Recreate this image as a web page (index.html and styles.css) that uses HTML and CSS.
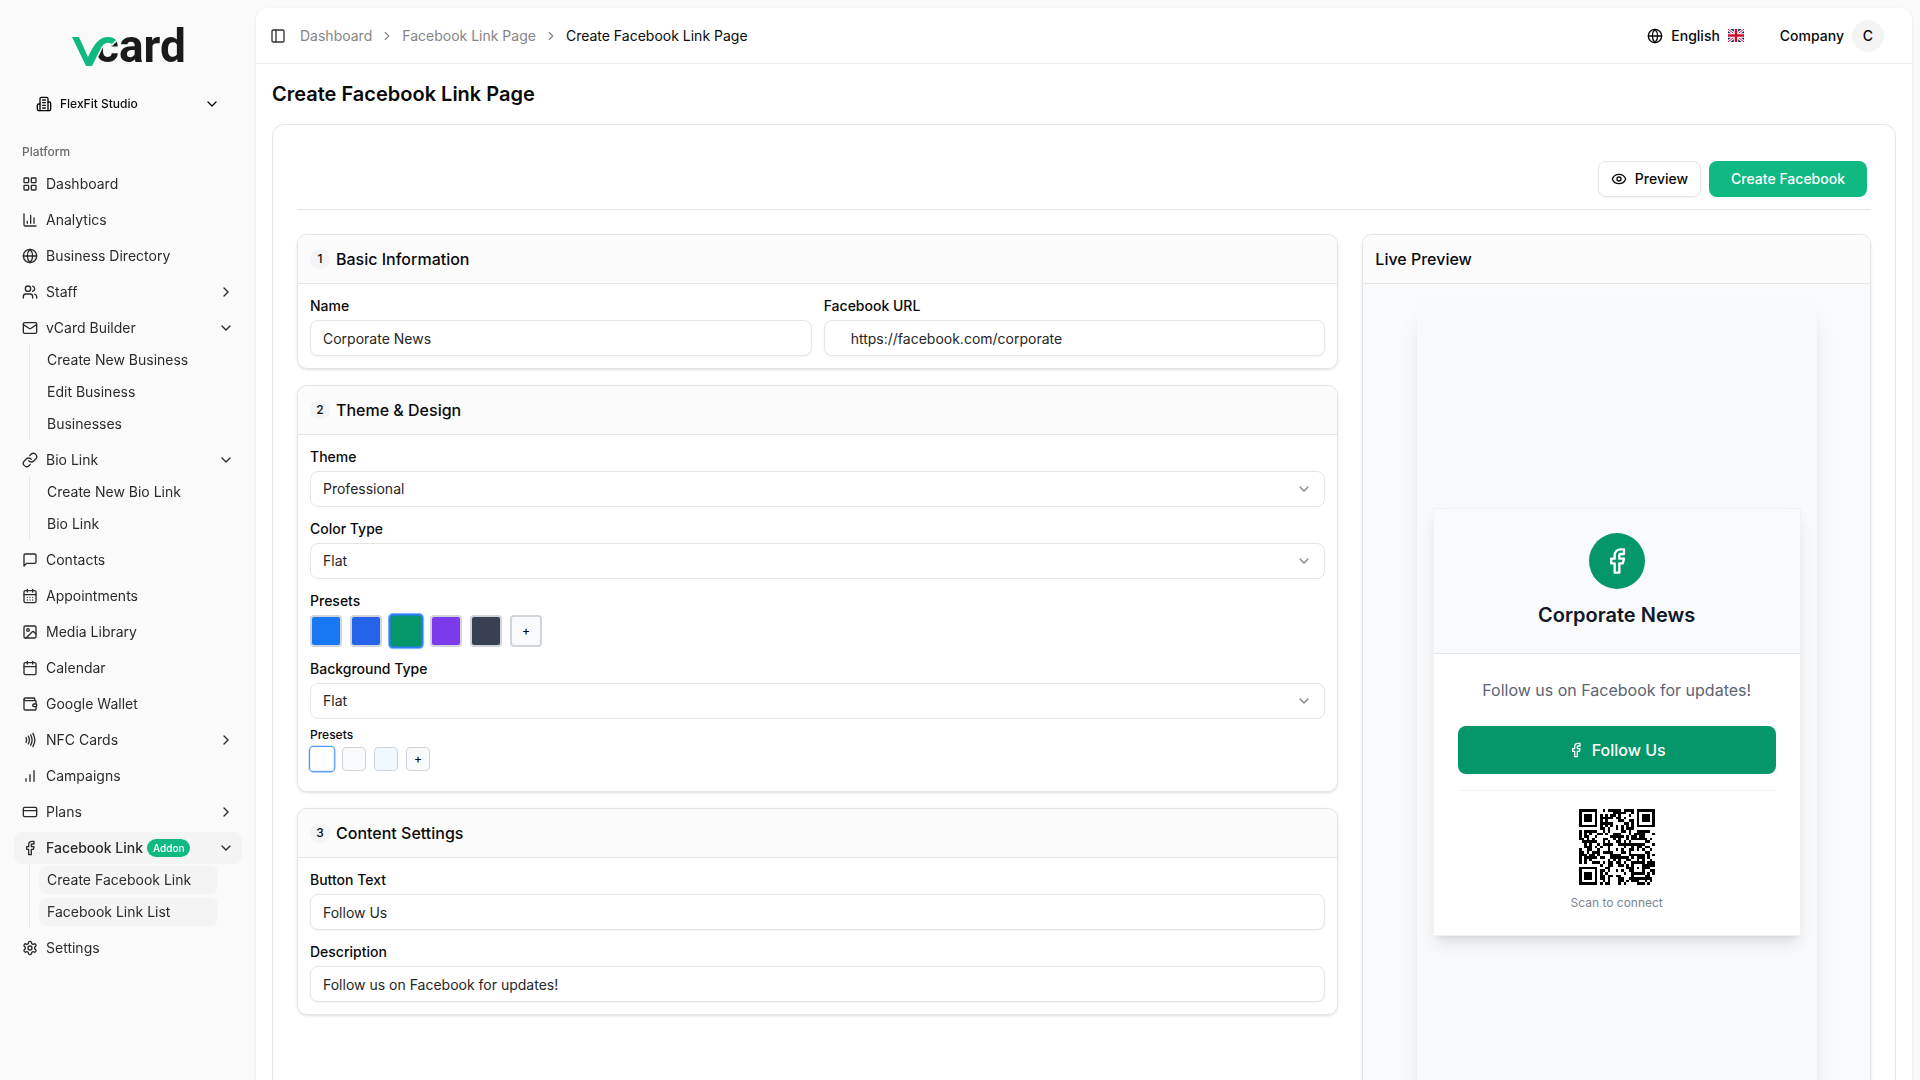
FILE: index.html
```html
<!DOCTYPE html>
<html lang="en">
<head>
  <meta charset="UTF-8">
  <meta name="viewport" content="width=device-width, initial-scale=1.0">
  <title>Create Facebook Link Page</title>
  <link rel="stylesheet" href="styles.css">
</head>
<body>

  <!-- Icon sprite -->
  <svg class="sprite" aria-hidden="true">
    <symbol id="i-building" viewBox="0 0 24 24"><path d="M6 22V4a2 2 0 0 1 2-2h8a2 2 0 0 1 2 2v18Z"/><path d="M6 12H4a2 2 0 0 0-2 2v6a2 2 0 0 0 2 2h2"/><path d="M18 9h2a2 2 0 0 1 2 2v9a2 2 0 0 1-2 2h-2"/><path d="M10 6h4M10 10h4M10 14h4M10 18h4"/></symbol>
    <symbol id="i-down" viewBox="0 0 24 24"><path d="m6 9 6 6 6-6"/></symbol>
    <symbol id="i-right" viewBox="0 0 24 24"><path d="m9 18 6-6-6-6"/></symbol>
    <symbol id="i-grid" viewBox="0 0 24 24"><rect x="3" y="3" width="7" height="7" rx="1"/><rect x="14" y="3" width="7" height="7" rx="1"/><rect x="14" y="14" width="7" height="7" rx="1"/><rect x="3" y="14" width="7" height="7" rx="1"/></symbol>
    <symbol id="i-chart" viewBox="0 0 24 24"><path d="M3 3v16a2 2 0 0 0 2 2h16"/><path d="M18 17V9M13 17V5M8 17v-3"/></symbol>
    <symbol id="i-globe" viewBox="0 0 24 24"><circle cx="12" cy="12" r="10"/><path d="M12 2a14.5 14.5 0 0 0 0 20 14.5 14.5 0 0 0 0-20"/><path d="M2 12h20"/></symbol>
    <symbol id="i-users" viewBox="0 0 24 24"><path d="M16 21v-2a4 4 0 0 0-4-4H6a4 4 0 0 0-4 4v2"/><circle cx="9" cy="7" r="4"/><path d="M22 21v-2a4 4 0 0 0-3-3.87"/><path d="M16 3.13a4 4 0 0 1 0 7.75"/></symbol>
    <symbol id="i-mail" viewBox="0 0 24 24"><rect x="2" y="4" width="20" height="16" rx="2"/><path d="m22 7-8.97 5.7a1.94 1.94 0 0 1-2.06 0L2 7"/></symbol>
    <symbol id="i-link" viewBox="0 0 24 24"><path d="M10 13a5 5 0 0 0 7.54.54l3-3a5 5 0 0 0-7.07-7.07l-1.72 1.71"/><path d="M14 11a5 5 0 0 0-7.54-.54l-3 3a5 5 0 0 0 7.07 7.07l1.71-1.71"/></symbol>
    <symbol id="i-message" viewBox="0 0 24 24"><path d="M21 15a2 2 0 0 1-2 2H7l-4 4V5a2 2 0 0 1 2-2h14a2 2 0 0 1 2 2z"/></symbol>
    <symbol id="i-days" viewBox="0 0 24 24"><path d="M8 2v4M16 2v4M3 10h18"/><rect x="3" y="4" width="18" height="18" rx="2"/><path d="M8 14h.01M12 14h.01M16 14h.01M8 18h.01M12 18h.01M16 18h.01"/></symbol>
    <symbol id="i-image" viewBox="0 0 24 24"><rect x="3" y="3" width="18" height="18" rx="2"/><circle cx="9" cy="9" r="2"/><path d="m21 15-3.086-3.086a2 2 0 0 0-2.828 0L6 21"/></symbol>
    <symbol id="i-calendar" viewBox="0 0 24 24"><path d="M8 2v4M16 2v4M3 10h18"/><rect x="3" y="4" width="18" height="18" rx="2"/></symbol>
    <symbol id="i-wallet" viewBox="0 0 24 24"><path d="M19 7V4a1 1 0 0 0-1-1H5a2 2 0 0 0 0 4h15a1 1 0 0 1 1 1v4h-3a2 2 0 0 0 0 4h3a1 1 0 0 0 1-1v-2a1 1 0 0 0-1-1"/><path d="M3 5v14a2 2 0 0 0 2 2h15a1 1 0 0 0 1-1v-4"/></symbol>
    <symbol id="i-nfc" viewBox="0 0 24 24"><path d="M6 8.32a7.43 7.43 0 0 1 0 7.36"/><path d="M9.46 6.21a11.76 11.76 0 0 1 0 11.58"/><path d="M12.91 4.1a15.91 15.91 0 0 1 .01 15.8"/><path d="M16.37 2a20.16 20.16 0 0 1 0 20"/></symbol>
    <symbol id="i-bars" viewBox="0 0 24 24"><path d="M12 20V10M18 20V4M6 20v-4"/></symbol>
    <symbol id="i-card" viewBox="0 0 24 24"><rect x="2" y="5" width="20" height="14" rx="2"/><path d="M2 10h20"/></symbol>
    <symbol id="i-facebook" viewBox="0 0 24 24"><path d="M18 2h-3a5 5 0 0 0-5 5v3H7v4h3v8h4v-8h3l1-4h-4V7a1 1 0 0 1 1-1h3z"/></symbol>
    <symbol id="i-settings" viewBox="0 0 24 24"><path d="M12.22 2h-.44a2 2 0 0 0-2 2v.18a2 2 0 0 1-1 1.73l-.43.25a2 2 0 0 1-2 0l-.15-.08a2 2 0 0 0-2.73.73l-.22.38a2 2 0 0 0 .73 2.73l.15.1a2 2 0 0 1 1 1.72v.51a2 2 0 0 1-1 1.74l-.15.09a2 2 0 0 0-.73 2.73l.22.38a2 2 0 0 0 2.73.73l.15-.08a2 2 0 0 1 2 0l.43.25a2 2 0 0 1 1 1.73V20a2 2 0 0 0 2 2h.44a2 2 0 0 0 2-2v-.18a2 2 0 0 1 1-1.73l.43-.25a2 2 0 0 1 2 0l.15.08a2 2 0 0 0 2.73-.73l.22-.39a2 2 0 0 0-.73-2.73l-.15-.08a2 2 0 0 1-1-1.74v-.5a2 2 0 0 1 1-1.74l.15-.09a2 2 0 0 0 .73-2.73l-.22-.38a2 2 0 0 0-2.73-.73l-.15.08a2 2 0 0 1-2 0l-.43-.25a2 2 0 0 1-1-1.73V4a2 2 0 0 0-2-2z"/><circle cx="12" cy="12" r="3"/></symbol>
    <symbol id="i-panel" viewBox="0 0 24 24"><rect x="3" y="3" width="18" height="18" rx="2"/><path d="M9 3v18"/></symbol>
    <symbol id="i-eye" viewBox="0 0 24 24"><path d="M2.062 12.348a1 1 0 0 1 0-.696 10.75 10.75 0 0 1 19.876 0 1 1 0 0 1 0 .696 10.75 10.75 0 0 1-19.876 0"/><circle cx="12" cy="12" r="3"/></symbol>
  </svg>

  <div class="app">
    <aside class="sidebar">
      <a href="#" class="logo" aria-label="vcard">
        <svg viewBox="-6 -10 124 60" width="124" height="60">
          <text x="23" y="34" class="logo-text">card</text>
          <path class="logo-mark" d="M0 9h7l9 20C22 16 27 9 36 9c4 0 6 1 8 3l-4 4c-5-3-9-1-12 6L20 38h-6z"/>
        </svg>
      </a>

      <button class="company-switch">
        <svg class="icon"><use href="#i-building"/></svg>
        <span>FlexFit Studio</span>
        <svg class="icon chevron"><use href="#i-down"/></svg>
      </button>

      <nav class="nav">
        <div class="nav-label">Platform</div>
        <a href="#" class="nav-item"><svg class="icon"><use href="#i-grid"/></svg>Dashboard</a>
        <a href="#" class="nav-item"><svg class="icon"><use href="#i-chart"/></svg>Analytics</a>
        <a href="#" class="nav-item"><svg class="icon"><use href="#i-globe"/></svg>Business Directory</a>
        <button class="nav-item"><svg class="icon"><use href="#i-users"/></svg>Staff<svg class="icon chevron"><use href="#i-right"/></svg></button>
        <div class="nav-group">
          <button class="nav-item"><svg class="icon"><use href="#i-mail"/></svg>vCard Builder<svg class="icon chevron"><use href="#i-down"/></svg></button>
          <div class="sub-nav">
            <a href="#" class="sub-item">Create New Business</a>
            <a href="#" class="sub-item">Edit Business</a>
            <a href="#" class="sub-item">Businesses</a>
          </div>
        </div>
        <div class="nav-group">
          <button class="nav-item"><svg class="icon"><use href="#i-link"/></svg>Bio Link<svg class="icon chevron"><use href="#i-down"/></svg></button>
          <div class="sub-nav">
            <a href="#" class="sub-item">Create New Bio Link</a>
            <a href="#" class="sub-item">Bio Link</a>
          </div>
        </div>
        <a href="#" class="nav-item"><svg class="icon"><use href="#i-message"/></svg>Contacts</a>
        <a href="#" class="nav-item"><svg class="icon"><use href="#i-days"/></svg>Appointments</a>
        <a href="#" class="nav-item"><svg class="icon"><use href="#i-image"/></svg>Media Library</a>
        <a href="#" class="nav-item"><svg class="icon"><use href="#i-calendar"/></svg>Calendar</a>
        <a href="#" class="nav-item"><svg class="icon"><use href="#i-wallet"/></svg>Google Wallet</a>
        <button class="nav-item"><svg class="icon"><use href="#i-nfc"/></svg>NFC Cards<svg class="icon chevron"><use href="#i-right"/></svg></button>
        <a href="#" class="nav-item"><svg class="icon"><use href="#i-bars"/></svg>Campaigns</a>
        <button class="nav-item"><svg class="icon"><use href="#i-card"/></svg>Plans<svg class="icon chevron"><use href="#i-right"/></svg></button>
        <div class="nav-group">
          <button class="nav-item active"><svg class="icon"><use href="#i-facebook"/></svg><span class="nav-text">Facebook Link <span class="addon">Addon</span></span><svg class="icon chevron"><use href="#i-down"/></svg></button>
          <div class="sub-nav">
            <a href="#" class="sub-item active">Create Facebook Link</a>
            <a href="#" class="sub-item active">Facebook Link List</a>
          </div>
        </div>
        <a href="#" class="nav-item"><svg class="icon"><use href="#i-settings"/></svg>Settings</a>
      </nav>
    </aside>

    <main class="main">
      <header class="topbar">
        <button class="icon-btn" aria-label="Toggle sidebar"><svg class="icon"><use href="#i-panel"/></svg></button>
        <nav class="breadcrumb">
          <a href="#">Dashboard</a>
          <svg class="icon small"><use href="#i-right"/></svg>
          <a href="#">Facebook Link Page</a>
          <svg class="icon small"><use href="#i-right"/></svg>
          <span class="current">Create Facebook Link Page</span>
        </nav>
        <div class="topbar-right">
          <button class="top-btn">
            <svg class="icon"><use href="#i-globe"/></svg>
            English
            <svg class="flag" viewBox="0 0 32 26">
              <rect width="32" height="26" fill="#012169"/>
              <path d="M0 0l32 26M32 0L0 26" stroke="#fff" stroke-width="6"/>
              <path d="M0 0l32 26M32 0L0 26" stroke="#c8102e" stroke-width="2"/>
              <path d="M16 0v26M0 13h32" stroke="#fff" stroke-width="9"/>
              <path d="M16 0v26M0 13h32" stroke="#c8102e" stroke-width="5"/>
            </svg>
          </button>
          <button class="top-btn">Company <span class="avatar">C</span></button>
        </div>
      </header>

      <div class="content">
        <h1>Create Facebook Link Page</h1>

        <div class="panel">
          <div class="actions">
            <button class="btn btn-outline"><svg class="icon"><use href="#i-eye"/></svg>Preview</button>
            <button class="btn btn-primary">Create Facebook</button>
          </div>

          <div class="columns">
            <form class="form">
              <section class="card">
                <h2 class="card-header"><span class="step">1</span>Basic Information</h2>
                <div class="card-body two-cols">
                  <div class="field">
                    <label for="name">Name</label>
                    <input type="text" id="name" value="Corporate News">
                  </div>
                  <div class="field">
                    <label for="url">Facebook URL</label>
                    <input type="text" id="url" class="url-input" value="https://facebook.com/corporate">
                  </div>
                </div>
              </section>

              <section class="card">
                <h2 class="card-header"><span class="step">2</span>Theme &amp; Design</h2>
                <div class="card-body">
                  <div class="field">
                    <label for="theme">Theme</label>
                    <div class="select">
                      <select id="theme"><option>Professional</option></select>
                      <svg class="icon"><use href="#i-down"/></svg>
                    </div>
                  </div>
                  <div class="field">
                    <label for="colorType">Color Type</label>
                    <div class="select">
                      <select id="colorType"><option>Flat</option></select>
                      <svg class="icon"><use href="#i-down"/></svg>
                    </div>
                  </div>
                  <div class="field">
                    <span class="label">Presets</span>
                    <div class="swatches">
                      <button type="button" class="swatch facebook" aria-label="Facebook blue"></button>
                      <button type="button" class="swatch blue" aria-label="Blue"></button>
                      <button type="button" class="swatch green selected" aria-label="Green"></button>
                      <button type="button" class="swatch purple" aria-label="Purple"></button>
                      <button type="button" class="swatch slate" aria-label="Slate"></button>
                      <button type="button" class="swatch add">+</button>
                    </div>
                  </div>
                  <div class="field background-field">
                    <label for="bgType">Background Type</label>
                    <div class="select">
                      <select id="bgType"><option>Flat</option></select>
                      <svg class="icon"><use href="#i-down"/></svg>
                    </div>
                    <span class="label-small">Presets</span>
                    <div class="swatches small">
                      <button type="button" class="swatch white selected" aria-label="White"></button>
                      <button type="button" class="swatch gray" aria-label="Gray"></button>
                      <button type="button" class="swatch sky" aria-label="Sky"></button>
                      <button type="button" class="swatch add">+</button>
                    </div>
                  </div>
                </div>
              </section>

              <section class="card">
                <h2 class="card-header"><span class="step">3</span>Content Settings</h2>
                <div class="card-body">
                  <div class="field">
                    <label for="buttonText">Button Text</label>
                    <input type="text" id="buttonText" value="Follow Us">
                  </div>
                  <div class="field">
                    <label for="description">Description</label>
                    <input type="text" id="description" value="Follow us on Facebook for updates!">
                  </div>
                </div>
              </section>
            </form>

            <section class="card preview">
              <h2 class="card-header">Live Preview</h2>
              <div class="preview-body">
                <div class="frame">
                  <div class="page-card">
                    <div class="page-head">
                      <div class="page-logo"><svg class="icon"><use href="#i-facebook"/></svg></div>
                      <h3>Corporate News</h3>
                    </div>
                    <div class="page-content">
                      <p class="page-text">Follow us on Facebook for updates!</p>
                      <button class="follow-btn"><svg class="icon"><use href="#i-facebook"/></svg>Follow Us</button>
                      <div class="qr-box">
                        <svg id="qr" class="qr" viewBox="0 0 29 29" shape-rendering="crispEdges"></svg>
                        <p>Scan to connect</p>
                      </div>
                    </div>
                  </div>
                </div>
              </div>
            </section>
          </div>
        </div>
      </div>
    </main>
  </div>

  <script src="qr.js"></script>
</body>
</html>
```
FILE: styles.css
```css
* {
  box-sizing: border-box;
}
body {
  margin: 0;
  height: 100vh;
  overflow-y: auto;
  scrollbar-width: none;
  font-family: Inter, "Liberation Sans", sans-serif;
  font-size: 14px;
  line-height: 20px;
  color: #0a0a0a;
  background-color: #fafafa;
}
button,
input,
select {
  font: inherit;
  color: inherit;
}
button {
  border: none;
  background: none;
  padding: 0;
  cursor: pointer;
}
a {
  color: inherit;
  text-decoration: none;
}
h1,
h2,
h3,
p {
  margin: 0;
}
.sprite {
  display: none;
}
.icon {
  width: 16px;
  height: 16px;
  flex-shrink: 0;
  fill: none;
  stroke: currentColor;
  stroke-width: 2;
  stroke-linecap: round;
  stroke-linejoin: round;
}
.icon.small {
  width: 14px;
  height: 14px;
}
.app {
  display: flex;
  align-items: flex-start;
}

/* Sidebar */
.sidebar {
  position: sticky;
  top: 0;
  width: 256px;
  flex-shrink: 0;
  height: 100vh;
  padding: 8px 14px;
}
.logo {
  display: flex;
  justify-content: center;
  align-items: center;
  height: 80px;
}
.logo-text {
  font-family: Roboto, sans-serif;
  font-size: 46px;
  font-weight: 700;
  fill: #1a1a1a;
}
.logo-mark {
  fill: #10b981;
  stroke: #fafafa;
  stroke-width: 3;
  paint-order: stroke;
}
.company-switch {
  display: flex;
  align-items: center;
  gap: 8px;
  width: 200px;
  height: 32px;
  margin: 0 14px 16px;
  padding: 0 8px;
  font-size: 12px;
  font-weight: 500;
}
.chevron {
  margin-left: auto;
}
.nav,
.nav-group {
  display: flex;
  flex-direction: column;
}
.nav {
  gap: 4px;
}
.nav-label {
  height: 28px;
  padding: 0 8px;
  line-height: 32px;
  font-size: 12px;
  font-weight: 500;
  color: #6b6b6b;
}
.nav-item {
  display: flex;
  align-items: center;
  gap: 8px;
  width: 100%;
  height: 32px;
  padding: 0 8px;
  border-radius: 8px;
  text-align: left;
  color: #2b2b2b;
}
.nav-item.active {
  background-color: #f4f4f5;
  font-weight: 500;
}
.nav-text {
  display: flex;
  align-items: center;
  gap: 4px;
}
.addon {
  padding: 0 6px;
  border-radius: 9px;
  font-size: 10px;
  line-height: 18px;
  color: #fff;
  background-color: #10b981;
}
.sub-nav {
  display: flex;
  flex-direction: column;
  gap: 4px;
  margin: 0 24px 0 15px;
  padding: 2px 0 2px 9px;
  border-left: 1px solid #e5e5e5;
}
.sub-item {
  padding: 4px 8px;
  border-radius: 8px;
  color: #2b2b2b;
}
.sub-item.active {
  background-color: #f4f4f5;
}

/* Main area */
.main {
  flex: 1;
  min-width: 0;
  margin: 8px 8px 8px 0;
  border-radius: 12px;
  background-color: #fff;
  box-shadow: 0 1px 3px rgba(0, 0, 0, 0.1);
}
.topbar {
  display: flex;
  align-items: center;
  gap: 14px;
  height: 56px;
  padding: 0 28px 0 14px;
  border-bottom: 1px solid #f0f0f0;
}
.icon-btn {
  display: flex;
  color: #333;
}
.breadcrumb {
  display: flex;
  align-items: center;
  gap: 8px;
  color: #858585;
}
.breadcrumb .current {
  color: #0a0a0a;
}
.topbar-right {
  display: flex;
  align-items: center;
  gap: 36px;
  margin-left: auto;
}
.top-btn {
  display: flex;
  align-items: center;
  gap: 8px;
  font-weight: 500;
}
.flag {
  width: 16px;
  height: 13px;
}
.avatar {
  width: 32px;
  height: 32px;
  border-radius: 50%;
  line-height: 32px;
  text-align: center;
  background-color: #f4f4f5;
}
.content {
  padding: 16px;
}
h1 {
  margin-bottom: 16px;
  font-size: 20px;
  line-height: 28px;
  font-weight: 600;
}
.panel {
  padding: 24px;
  border: 1px solid #e5e5e5;
  border-radius: 12px;
}
.actions {
  display: flex;
  justify-content: flex-end;
  gap: 8px;
  padding: 12px 4px;
  margin-bottom: 24px;
  border-bottom: 1px solid #e5e5e5;
}
.btn {
  display: flex;
  align-items: center;
  gap: 8px;
  height: 36px;
  border-radius: 8px;
  font-weight: 500;
}
.btn-outline {
  padding: 0 12px;
  border: 1px solid #e5e5e5;
  box-shadow: 0 1px 2px rgba(0, 0, 0, 0.05);
}
.btn-primary {
  padding: 0 22px;
  color: #fff;
  background-color: #10b981;
}
.columns {
  display: grid;
  grid-template-columns: repeat(3, 1fr);
  gap: 24px;
}
.form {
  grid-column: span 2;
  display: flex;
  flex-direction: column;
  gap: 16px;
}

/* Cards */
.card {
  border: 1px solid #e5e5e5;
  border-radius: 10px;
  overflow: hidden;
  box-shadow: 0 1px 3px rgba(0, 0, 0, 0.1), 0 1px 2px -1px rgba(0, 0, 0, 0.1);
}
.card-header {
  display: flex;
  align-items: center;
  gap: 6px;
  padding: 12px;
  border-bottom: 1px solid #e5e5e5;
  font-size: 16px;
  line-height: 24px;
  font-weight: 500;
  background-color: #fbfbfb;
}
.step {
  width: 20px;
  height: 20px;
  border-radius: 50%;
  font-size: 12px;
  line-height: 20px;
  text-align: center;
  background-color: #f3f4f6;
}
.card-body {
  display: flex;
  flex-direction: column;
  gap: 12px;
  padding: 12px;
}
.card-body.two-cols {
  display: grid;
  grid-template-columns: 1fr 1fr;
}
.field {
  display: flex;
  flex-direction: column;
  gap: 4px;
}
.field label,
.label {
  font-weight: 500;
}
.field input,
.field select {
  width: 100%;
  height: 36px;
  padding: 0 12px;
  border: 1px solid #e5e5e5;
  border-radius: 8px;
  color: #262626;
  background-color: #fff;
}
.field input {
  box-shadow: 0 1px 2px rgba(0, 0, 0, 0.05);
}
.field .url-input {
  padding-left: 26px;
}
.select {
  display: grid;
  align-items: center;
}
.select select,
.select .icon {
  grid-area: 1 / 1;
}
.select select {
  appearance: none;
}
.select .icon {
  justify-self: end;
  margin-right: 13px;
  color: #858585;
  pointer-events: none;
}
.label-small {
  margin-top: 4px;
  font-size: 12px;
  line-height: 16px;
  font-weight: 500;
}
.background-field {
  padding-bottom: 8px;
}
.swatches {
  display: flex;
  gap: 8px;
}
.swatch {
  width: 32px;
  height: 32px;
  border: 2px solid #d1d5db;
  border-radius: 4px;
  font-size: 12px;
  font-weight: 500;
  line-height: 16px;
}
.swatches.small .swatch {
  width: 24px;
  height: 24px;
  border-width: 1px;
}
.swatches .swatch.selected {
  border-color: #2b7fff;
  transform: scale(1.1);
}
.swatch.facebook { background-color: #1877f2; }
.swatch.blue { background-color: #2563eb; }
.swatch.green { background-color: #059669; }
.swatch.purple { background-color: #7c3aed; }
.swatch.slate { background-color: #374151; }
.swatch.white { background-color: #fff; }
.swatch.gray,
.swatch.add { background-color: #f9fafb; }
.swatch.sky { background-color: #f0f9ff; }

/* Live preview */
.preview-body {
  padding: 16px;
  background-color: #f9fafc;
}
.frame {
  display: flex;
  align-items: center;
  max-width: 400px;
  min-height: 844px;
  margin: 0 auto;
  padding: 16px;
  background-color: #f8f9fb;
  box-shadow: 0 20px 25px -5px rgba(0, 0, 0, 0.1), 0 8px 10px -6px rgba(0, 0, 0, 0.1);
}
.page-card {
  width: 100%;
  border: 1px solid #f1f2f4;
  background-color: #fff;
  box-shadow: 0 10px 15px -3px rgba(0, 0, 0, 0.1), 0 4px 6px -4px rgba(0, 0, 0, 0.1);
}
.page-head {
  display: flex;
  flex-direction: column;
  align-items: center;
  gap: 12px;
  padding: 24px;
  border-bottom: 1px solid #e5e7eb;
  background-color: #f9fafc;
}
.page-logo {
  display: flex;
  align-items: center;
  justify-content: center;
  width: 56px;
  height: 56px;
  border-radius: 50%;
  color: #fff;
  background-color: #059669;
}
.page-logo .icon {
  width: 28px;
  height: 28px;
}
.page-head h3 {
  font-size: 20px;
  line-height: 28px;
  font-weight: 600;
  color: #111827;
}
.page-content {
  padding: 24px;
  text-align: center;
}
.page-text {
  margin-bottom: 24px;
  font-size: 16px;
  line-height: 24px;
  color: #5b6472;
}
.follow-btn {
  display: flex;
  align-items: center;
  justify-content: center;
  gap: 8px;
  width: 100%;
  height: 48px;
  margin-bottom: 16px;
  border-radius: 8px;
  font-size: 16px;
  font-weight: 500;
  color: #fff;
  background-color: #059669;
}
.qr-box {
  padding-top: 16px;
  border-top: 1px solid #f3f4f6;
  font-size: 12px;
  line-height: 16px;
  color: #7c8594;
}
.qr {
  display: block;
  width: 80px;
  height: 80px;
  margin: 0 auto 8px;
  padding: 2px;
}
```
FILE: qr.js
```js
// QR code, version 3 (29x29), error correction level M
const SIZE = 29;
const DATA_WORDS = 44;
const EC_WORDS = 26;

const exp = [];
const log = [];
for (let i = 0, x = 1; i < 255; i++) {
  exp[i] = x;
  log[x] = i;
  x = x << 1;
  if (x > 255) x ^= 0x11d;
}

function mul(a, b) {
  return a && b ? exp[(log[a] + log[b]) % 255] : 0;
}

function getCodewords(text) {
  let bits = '0100' + text.length.toString(2).padStart(8, '0');
  for (const c of text) bits += c.charCodeAt(0).toString(2).padStart(8, '0');
  bits += '0000';
  const data = [];
  for (let i = 0; i < bits.length; i += 8) data.push(parseInt(bits.substr(i, 8), 2));
  for (let pad = 0xec; data.length < DATA_WORDS; pad ^= 0xec ^ 0x11) data.push(pad);

  // generator polynomial
  const gen = new Array(EC_WORDS).fill(0);
  gen[EC_WORDS - 1] = 1;
  for (let i = 0; i < EC_WORDS; i++) {
    for (let j = 0; j < EC_WORDS; j++) {
      gen[j] = mul(gen[j], exp[i]) ^ (gen[j + 1] || 0);
    }
  }
  const ec = new Array(EC_WORDS).fill(0);
  data.forEach(b => {
    const f = b ^ ec.shift();
    ec.push(0);
    gen.forEach((g, i) => { ec[i] ^= mul(g, f); });
  });
  return data.concat(ec);
}

const masks = [
  (x, y) => (x + y) % 2,
  (x, y) => y % 2,
  (x, y) => x % 3,
  (x, y) => (x + y) % 3,
  (x, y) => (Math.floor(x / 3) + Math.floor(y / 2)) % 2,
  (x, y) => (x * y) % 2 + (x * y) % 3,
  (x, y) => ((x * y) % 2 + (x * y) % 3) % 2,
  (x, y) => ((x + y) % 2 + (x * y) % 3) % 2
];

function buildMatrix(text, mask) {
  const grid = Array.from({ length: SIZE }, () => new Array(SIZE).fill(null));
  const set = (x, y, dark) => {
    if (x >= 0 && y >= 0 && x < SIZE && y < SIZE) grid[y][x] = dark ? 1 : 0;
  };

  for (let i = 0; i < SIZE; i++) {
    set(6, i, i % 2 === 0);
    set(i, 6, i % 2 === 0);
  }
  [[3, 3], [SIZE - 4, 3], [3, SIZE - 4]].forEach(([cx, cy]) => {
    for (let dy = -4; dy <= 4; dy++) {
      for (let dx = -4; dx <= 4; dx++) {
        const d = Math.max(Math.abs(dx), Math.abs(dy));
        set(cx + dx, cy + dy, d !== 2 && d !== 4);
      }
    }
  });
  for (let dy = -2; dy <= 2; dy++) {
    for (let dx = -2; dx <= 2; dx++) {
      set(22 + dx, 22 + dy, Math.max(Math.abs(dx), Math.abs(dy)) !== 1);
    }
  }

  // format bits
  let rem = mask;
  for (let i = 0; i < 10; i++) rem = (rem << 1) ^ ((rem >>> 9) * 0x537);
  const format = ((mask << 10) | rem) ^ 0x5412;
  const bit = i => (format >>> i) & 1;
  for (let i = 0; i < 6; i++) set(8, i, bit(i));
  set(8, 7, bit(6));
  set(8, 8, bit(7));
  set(7, 8, bit(8));
  for (let i = 9; i < 15; i++) set(14 - i, 8, bit(i));
  for (let i = 0; i < 8; i++) set(SIZE - 1 - i, 8, bit(i));
  for (let i = 8; i < 15; i++) set(8, SIZE - 15 + i, bit(i));
  set(8, SIZE - 8, 1);

  // data in zigzag order
  const words = getCodewords(text);
  let n = 0;
  for (let right = SIZE - 1; right >= 1; right -= 2) {
    if (right === 6) right = 5;
    const up = ((right + 1) & 2) === 0;
    for (let v = 0; v < SIZE; v++) {
      for (let j = 0; j < 2; j++) {
        const x = right - j;
        const y = up ? SIZE - 1 - v : v;
        if (grid[y][x] !== null) continue;
        const value = n < words.length * 8 ? (words[n >> 3] >>> (7 - (n & 7))) & 1 : 0;
        n++;
        grid[y][x] = value ^ (masks[mask](x, y) === 0 ? 1 : 0);
      }
    }
  }
  return grid;
}

function penalty(grid) {
  let score = 0;
  const columns = grid.map((_, x) => grid.map(row => row[x]));
  grid.concat(columns).forEach(row => {
    const line = row.join('');
    (line.match(/0{5,}|1{5,}/g) || []).forEach(run => { score += run.length - 2; });
    score += 40 * (line.match(/(?=10111010000|00001011101)/g) || []).length;
  });
  for (let y = 0; y < SIZE - 1; y++) {
    for (let x = 0; x < SIZE - 1; x++) {
      const sum = grid[y][x] + grid[y][x + 1] + grid[y + 1][x] + grid[y + 1][x + 1];
      if (sum === 0 || sum === 4) score += 3;
    }
  }
  const dark = grid.flat().filter(Boolean).length / (SIZE * SIZE);
  return score + Math.floor(Math.abs(dark - 0.5) * 20) * 10;
}

function drawQr(svg, text) {
  const grid = masks.map((_, m) => buildMatrix(text, m))
    .reduce((best, g) => (penalty(g) < penalty(best) ? g : best));
  let d = '';
  grid.forEach((row, y) => row.forEach((dark, x) => {
    if (dark) d += `M${x} ${y}h1v1h-1z`;
  }));
  const path = document.createElementNS('http://www.w3.org/2000/svg', 'path');
  path.setAttribute('d', d);
  svg.appendChild(path);
}

drawQr(document.getElementById('qr'), document.getElementById('url').value);
```
